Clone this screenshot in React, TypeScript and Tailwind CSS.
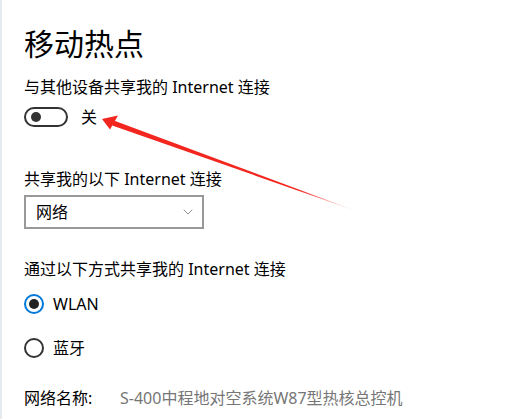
import { ChevronDown } from "lucide-react";

const font = { fontFamily: '"Noto Sans", "Noto Sans CJK SC", sans-serif' };

function Toggle() {
    return (
        <div className="flex h-5 w-11 items-center rounded-full border-2 border-[#333] pl-[5px]">
            <div className="h-[10px] w-[10px] rounded-full bg-[#333]" />
        </div>
    )
}

function Radio({ checked, label }: { checked?: boolean; label: string }) {
    return (
        <div className="flex h-5 items-center gap-[9px]">
            <div className={`flex h-5 w-5 items-center justify-center rounded-full border-2 ${checked ? 'border-[#0078d7]' : 'border-[#333]'}`}>
                {checked && <div className="h-[10px] w-[10px] rounded-full bg-[#222]" />}
            </div>
            <span className="text-[16px] leading-5 text-black">{label}</span>
        </div>
    )
}

function Arrow() {
    return (
        <svg className="pointer-events-none absolute left-0 top-0" width="526" height="419">
            <defs>
                <linearGradient id="fade" gradientUnits="userSpaceOnUse" x1="110" y1="123" x2="357" y2="212">
                    <stop offset="0" stopColor="#f3261f" />
                    <stop offset="0.75" stopColor="#f3261f" />
                    <stop offset="1" stopColor="#f3261f" stopOpacity="0" />
                </linearGradient>
            </defs>
            <polygon points="100,119 116,115.5 108,129.5" fill="#f3261f" />
            <polygon points="111.8,120.6 357,212 110.2,125.4" fill="url(#fade)" />
        </svg>
    )
}

export default function App() {
    return (
        <div className="relative h-[419px] w-[526px] overflow-hidden border-l-2 border-[#e6ebf1] bg-white" style={font}>
            <div className="flex flex-col pl-[22px] pt-6 text-black">
                <h1 className="text-[30px] leading-10 font-normal">移动热点</h1>
                <div className="mt-[11px] text-[16px] leading-6">与其他设备共享我的 Internet 连接</div>
                <div className="mt-2 flex h-5 items-center gap-[13px]">
                    <Toggle />
                    <span className="text-[16px] leading-5">关</span>
                </div>
                <div className="mt-10 text-[16px] leading-6">共享我的以下 Internet 连接</div>
                <div className="mt-1 flex h-[34px] w-[180px] items-center justify-between border-2 border-[#999] pl-[10px] pr-[6px]">
                    <span className="text-[16px]">网络</span>
                    <ChevronDown size={16} strokeWidth={1.1} className="text-[#666]" />
                </div>
                <div className="mt-[28px] text-[16px] leading-6">通过以下方式共享我的 Internet 连接</div>
                <div className="mt-[13px]">
                    <Radio checked label="WLAN" />
                </div>
                <div className="mt-[24px]">
                    <Radio label="蓝牙" />
                </div>
                <div className="mt-7 flex text-[16px] leading-6">
                    <span className="w-[96px]">网络名称:</span>
                    <span className="text-[#767676]">S-400中程地对空系统W87型热核总控机</span>
                </div>
            </div>
            <Arrow />
        </div>
    )
}
